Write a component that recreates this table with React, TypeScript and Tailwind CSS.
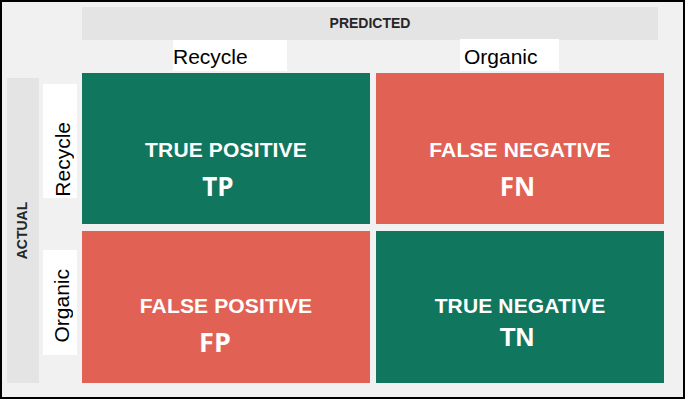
export default function App() {
    const cells = [
        { title: "TRUE POSITIVE", code: "TP", bg: "bg-[#10765e]", pt: "pt-[65px]", codeCls: "mt-[11px] mr-[16px] font-['Open_Sans',sans-serif] text-[26px] leading-[26px]" },
        { title: "FALSE NEGATIVE", code: "FN", bg: "bg-[#e26155]", pt: "pt-[65px]", codeCls: "mt-[11px] mr-[5px] font-['Open_Sans',sans-serif] text-[26px] leading-[26px]" },
        { title: "FALSE POSITIVE", code: "FP", bg: "bg-[#e26155]", pt: "pt-[63px]", codeCls: "mt-[10px] mr-[22px] font-['Open_Sans',sans-serif] text-[27px] leading-[27px]" },
        { title: "TRUE NEGATIVE", code: "TN", bg: "bg-[#10765e]", pt: "pt-[63px]", codeCls: "mt-[6px] mr-[6px] text-[26px] leading-[26px]" },
    ];

    return (
        <div className="h-[400px] w-[686px] bg-white font-['Liberation_Sans',Arial,sans-serif]">
            <div className="flex h-[399px] w-[685px] flex-col border-2 border-black bg-[#f1f1f1]">

                {/* predicted header */}
                <div className="ml-[80px] mt-[5px] flex h-[33px] w-[576px] items-center justify-center bg-[#e4e4e4] text-[14px] font-bold text-[#262626]">
                    PREDICTED
                </div>

                {/* column labels */}
                <div className="flex h-[33px] items-start text-[21px] text-black">
                    <div className="ml-[171px] h-[31px] w-[114px] bg-white leading-[33px]">Recycle</div>
                    <div className="ml-[173px] -mt-px h-[32px] w-[99px] bg-white pl-[4px] leading-[35px]">Organic</div>
                </div>

                <div className="flex items-start">
                    {/* actual side bar */}
                    <div className="ml-[5px] mt-[5px] flex h-[305px] w-[32px] items-center justify-center bg-[#e4e4e4]">
                        <span className="-rotate-90 whitespace-nowrap text-[14px] font-bold text-[#262626]">ACTUAL</span>
                    </div>

                    {/* row labels */}
                    <div className="ml-[4px] flex w-[34px] flex-col text-[21px] text-black">
                        <div className="mt-[11px] flex h-[114px] flex-col items-start justify-end bg-white pb-[1px] pl-[8px]">
                            <span className="rotate-180 whitespace-nowrap leading-[24px] [writing-mode:vertical-rl]">Recycle</span>
                        </div>
                        <div className="mt-[52px] flex h-[105px] flex-col items-start justify-end bg-white pb-[12px] pl-[7px]">
                            <span className="rotate-180 whitespace-nowrap leading-[24px] [writing-mode:vertical-rl]">Organic</span>
                        </div>
                    </div>

                    {/* matrix */}
                    <div className="ml-[5px] grid grid-cols-[288px_288px] grid-rows-[151px_152px] gap-x-[6px] gap-y-[7px]">
                        {cells.map(c => (
                            <div key={c.code} className={`flex flex-col items-center font-bold text-white ${c.bg} ${c.pt}`}>
                                <div className="text-[21px] leading-[24px] tracking-[0.15px]">{c.title}</div>
                                <div className={c.codeCls}>{c.code}</div>
                            </div>
                        ))}
                    </div>
                </div>
            </div>
        </div>
    );
}
